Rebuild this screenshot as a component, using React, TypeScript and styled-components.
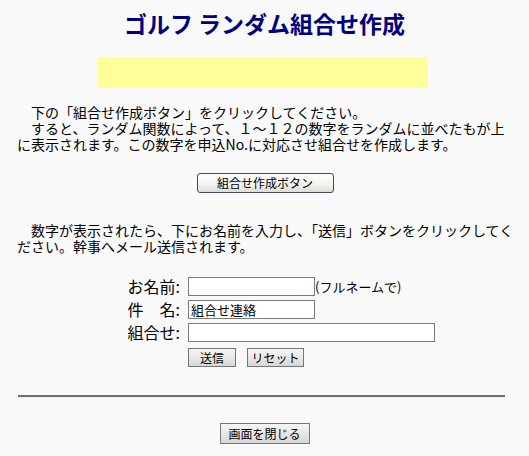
import styled, { createGlobalStyle } from "styled-components";

// ─── Global ───────────────────────────────────────────────────────────────────

const GlobalStyle = createGlobalStyle`
  html, body {
    margin: 0;
    padding: 0;
    background: #f9f9f9;
  }
  body {
    font-family: "Noto Sans CJK JP", "Noto Sans", sans-serif;
    color: #000;
  }
`;

const IDEO_SPACE = "\u3000";

// ─── Styled ───────────────────────────────────────────────────────────────────

const Page = styled.div`
  width: 529px;
  min-height: 456px;
  display: flex;
  flex-direction: column;
  align-items: stretch;
`;

const Title = styled.h1`
  margin: 10px 0 0;
  font-size: 23px;
  line-height: 26px;
  font-weight: 700;
  color: #000080;
  text-align: center;
`;

const ResultBox = styled.div`
  align-self: center;
  width: 331px;
  height: 31px;
  margin: 21px 0 0 -4px;
  background: #ffff99;
`;

const Note = styled.p<{ $top: number }>`
  margin: ${({ $top }) => $top}px 0 0;
  padding: 0 4px 0 17px;
  font-size: 14px;
  line-height: 16px;
  white-space: pre;
`;

const Center = styled.div<{ $top: number }>`
  display: flex;
  justify-content: center;
  margin-top: ${({ $top }) => $top}px;
`;

const MakeButton = styled.button`
  width: 137px;
  height: 20px;
  margin-left: 1px;
  padding: 0;
  font-family: inherit;
  font-size: 12px;
  line-height: 1;
  color: #000;
  border: 1px solid #3c4c66;
  border-radius: 3px;
  background: linear-gradient(#ffffff 0%, #f2f2ee 60%, #dedcd4 100%);
`;

const Form = styled.div`
  display: grid;
  grid-template-columns: 78px auto;
  column-gap: 5px;
  row-gap: 4px;
  margin: 23px 0 0 105px;
  align-items: center;
`;

const Label = styled.span`
  padding-right: 3px;
  font-size: 16px;
  line-height: 19px;
  text-align: right;
  white-space: pre;
`;

const Field = styled.div`
  display: flex;
  align-items: center;
`;

const TextBox = styled.input<{ $w: number }>`
  box-sizing: border-box;
  width: ${({ $w }) => $w}px;
  height: 19px;
  margin: 0;
  padding: 0 2px;
  border: 1px solid #7a7a7a;
  background: #fff;
  font-family: inherit;
  font-size: 13px;
  color: #000;
  outline: none;
`;

const Hint = styled.span`
  font-size: 13px;
  line-height: 19px;
`;

const ButtonRow = styled.div`
  display: flex;
  gap: 11px;
  margin-top: 2px;
`;

const GrayButton = styled.button<{ $w: number; $h?: number }>`
  box-sizing: border-box;
  width: ${({ $w }) => $w}px;
  height: ${({ $h }) => $h ?? 19}px;
  padding: 0;
  font-family: inherit;
  font-size: 12px;
  line-height: 1;
  color: #000;
  border: 1px solid #767676;
  border-radius: 0;
  background: linear-gradient(#f6f6f6 0%, #e6e6e6 55%, #d6d6d6 100%);
`;

const Rule = styled.hr`
  margin: 28px 24px 0 18px;
  height: 0;
  border: none;
  border-top: 2px solid #6e6e6e;
  border-bottom: 1px solid #ececec;
`;

// ─── Component ────────────────────────────────────────────────────────────────

export default function App() {
  return (
    <Page>
      <GlobalStyle />
      <Title>ゴルフ ランダム組合せ作成</Title>
      <ResultBox />

      <Note $top={16}>
        {IDEO_SPACE + "下の「組合せ作成ボタン」をクリックしてください。"}
        <br />
        {IDEO_SPACE + "すると、ランダム関数によって、１～１２の数字をランダムに並べたもが上"}
        <br />
        {"に表示されます。この数字を申込No.に対応させ組合せを作成します。"}
      </Note>

      <Center $top={21}>
        <MakeButton>組合せ作成ボタン</MakeButton>
      </Center>

      <Note $top={29}>
        {IDEO_SPACE + "数字が表示されたら、下にお名前を入力し、「送信」ボタンをクリックしてく"}
        <br />
        {"ださい。幹事へメール送信されます。"}
      </Note>

      <Form>
        <Label>お名前:</Label>
        <Field>
          <TextBox $w={127} />
          <Hint>(フルネームで)</Hint>
        </Field>
        <Label>{"件" + IDEO_SPACE + "名:"}</Label>
        <Field>
          <TextBox $w={127} defaultValue="組合せ連絡" />
        </Field>
        <Label>組合せ:</Label>
        <Field>
          <TextBox $w={247} />
        </Field>
        <span />
        <ButtonRow>
          <GrayButton $w={48}>送信</GrayButton>
          <GrayButton $w={57}>リセット</GrayButton>
        </ButtonRow>
      </Form>

      <Rule />

      <Center $top={25}>
        <GrayButton $w={90} $h={21}>
          画面を閉じる
        </GrayButton>
      </Center>
    </Page>
  );
}
